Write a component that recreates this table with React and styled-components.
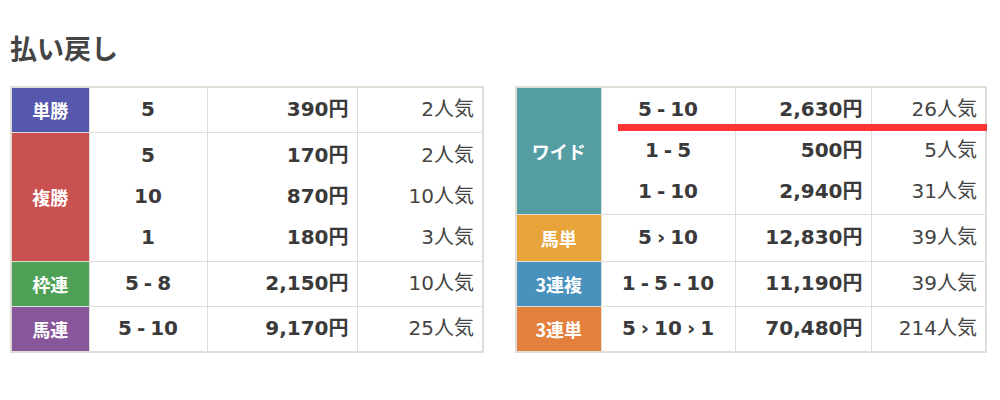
import React from "react";
import styled, { createGlobalStyle } from "styled-components";

const GlobalStyle = createGlobalStyle`
  body {
    margin: 0;
    background: #fff;
    font-family: "Noto Sans CJK JP", "Noto Sans", sans-serif;
    color: #3a3a3a;
  }
`;

/* styled-components */
const Page = styled.div`
  padding: 28px 10px 0 10px;
`;

const Heading = styled.h2`
  margin: 0 0 18px 0;
  font-size: 27px;
  line-height: 40px;
  font-weight: 700;
  color: #444;
`;

const Tables = styled.div`
  display: flex;
  gap: 33px;
  align-items: flex-start;
`;

const Wrap = styled.div`
  position: relative;
  width: ${(p) => p.width}px;
`;

const Table = styled.table`
  width: 100%;
  table-layout: fixed;
  border-collapse: collapse;
  border: 2px solid #deded6;
`;

const Row = styled.tr`
  height: ${(p) => p.height}px;
`;

const Label = styled.th`
  background: ${(p) => p.color};
  color: #fff;
  font-size: 18px;
  font-weight: 700;
  border: 1px solid #deded6;
  padding: 0;
`;

const Cell = styled.td`
  border: 1px solid #deded6;
  padding: 0 8px;
  text-align: ${(p) => p.align || "center"};
  font-family: "DejaVu Sans", "Noto Sans CJK JP", sans-serif;
  font-size: 20px;
  font-weight: ${(p) => (p.light ? 400 : 700)};
  color: ${(p) => (p.light ? "#444" : "#3a3a3a")};
  vertical-align: middle;
`;

const Line = styled.div`
  line-height: 41px;
  white-space: nowrap;
`;

const Sep = styled.span`
  display: inline-block;
  margin: 0 5px;
  font-weight: 700;
`;

const Marker = styled.div`
  position: absolute;
  left: 103px;
  top: 38px;
  width: 369px;
  height: 7px;
  background: #ff3434;
`;

function Combo({ value }) {
  const parts = value.split(/([->])/);
  return (
    <Line>
      {parts.map((p, i) =>
        p === "-" ? <Sep key={i}>-</Sep> : p === ">" ? <Sep key={i}>›</Sep> : <span key={i}>{p}</span>
      )}
    </Line>
  );
}

const left = [
  { label: "単勝", color: "#5558ad", h: 45, items: [["5", "390円", "2人気"]] },
  {
    label: "複勝",
    color: "#c95150",
    h: 129,
    items: [
      ["5", "170円", "2人気"],
      ["10", "870円", "10人気"],
      ["1", "180円", "3人気"],
    ],
  },
  { label: "枠連", color: "#4fa157", h: 45, items: [["5-8", "2,150円", "10人気"]] },
  { label: "馬連", color: "#87569b", h: 46, items: [["5-10", "9,170円", "25人気"]] },
];

const right = [
  {
    label: "ワイド",
    color: "#549da3",
    h: 127,
    items: [
      ["5-10", "2,630円", "26人気"],
      ["1-5", "500円", "5人気"],
      ["1-10", "2,940円", "31人気"],
    ],
  },
  { label: "馬単", color: "#e6a43b", h: 47, items: [["5>10", "12,830円", "39人気"]] },
  { label: "3連複", color: "#4892bd", h: 45, items: [["1-5-10", "11,190円", "39人気"]] },
  { label: "3連単", color: "#e4803d", h: 46, items: [["5>10>1", "70,480円", "214人気"]] },
];

function PayTable({ rows, cols, width, children }) {
  return (
    <Wrap width={width}>
      <Table>
        <colgroup>
          {cols.map((w, i) => (
            <col key={i} style={{ width: w }} />
          ))}
        </colgroup>
        <tbody>
          {rows.map((r) => (
            <Row key={r.label} height={r.h}>
              <Label color={r.color}>{r.label}</Label>
              <Cell>
                {r.items.map((it, i) => (
                  <Combo key={i} value={it[0]} />
                ))}
              </Cell>
              <Cell align="right">
                {r.items.map((it, i) => (
                  <Line key={i}>{it[1]}</Line>
                ))}
              </Cell>
              <Cell align="right" light>
                {r.items.map((it, i) => (
                  <Line key={i}>{it[2]}</Line>
                ))}
              </Cell>
            </Row>
          ))}
        </tbody>
      </Table>
      {children}
    </Wrap>
  );
}

export default function App() {
  return (
    <Page>
      <GlobalStyle />
      <Heading>払い戻し</Heading>
      <Tables>
        <PayTable rows={left} cols={[78, 118, 150, 126]} width={472} />
        <PayTable rows={right} cols={[85, 134, 136, 115]} width={470}>
          <Marker />
        </PayTable>
      </Tables>
    </Page>
  );
}
